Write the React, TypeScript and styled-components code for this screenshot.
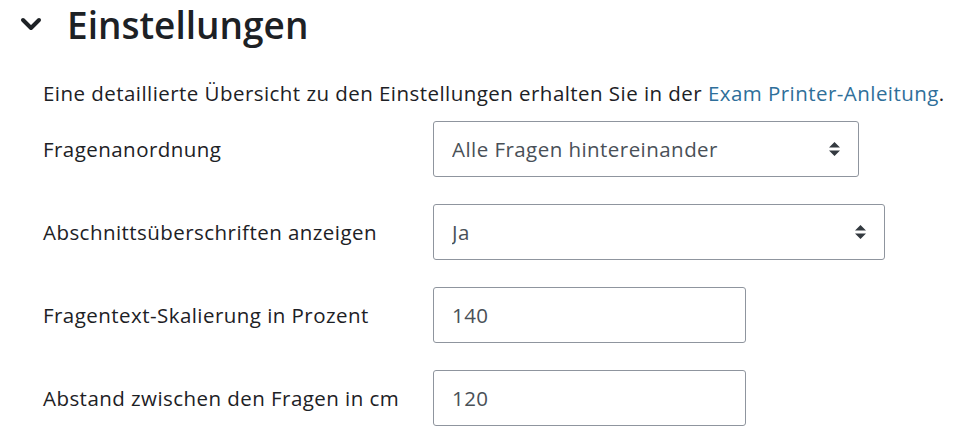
import React from 'react'
import styled, { createGlobalStyle } from 'styled-components'

const GlobalStyle = createGlobalStyle`
    body {
        margin: 0;
        background: #fff;
        font-family: "Open Sans", "Liberation Sans", sans-serif;
        color: #1d2125;
    }
`

const Page = styled.div`
    width: 961px;
    height: 430px;
    overflow: hidden;
    box-sizing: border-box;
    padding: 0 0 0 20px;
`

const Header = styled.div`
    display: flex;
    align-items: center;
    height: 48px;
    gap: 25px;

    svg {
        width: 22px;
        height: 14px;
        flex-shrink: 0;
    }
`

const Title = styled.h2`
    margin: 0;
    font-size: 37px;
    font-weight: 600;
    color: #1d2125;
`

const Body = styled.div`
    padding-left: 23px;
    font-size: 20.5px;
    letter-spacing: 0.45px;
`

const Intro = styled.p`
    margin: 30px 0 0;
    line-height: 30px;

    a {
        color: #2f6f9a;
        text-decoration: none;
    }
`

const Form = styled.div`
    margin-top: 13px;
    display: flex;
    flex-direction: column;
    gap: 27px;
`

const Row = styled.div`
    display: flex;
    align-items: center;
    height: 56px;
`

const Label = styled.label`
    width: 390px;
    flex-shrink: 0;
`

const SelectWrap = styled.div<{ $w: number }>`
    position: relative;
    width: ${p => p.$w}px;
    height: 56px;

    svg {
        position: absolute;
        right: 19px;
        top: 21px;
        width: 11px;
        height: 14px;
        pointer-events: none;
    }
`

const Select = styled.select`
    appearance: none;
    width: 100%;
    height: 100%;
    box-sizing: border-box;
    border: 1px solid #8f959e;
    border-radius: 3px;
    background: #fff;
    padding: 0 40px 0 18px;
    font: inherit;
    letter-spacing: inherit;
    color: #495057;
`

const Input = styled.input`
    width: 313px;
    height: 56px;
    box-sizing: border-box;
    border: 1px solid #8f959e;
    border-radius: 3px;
    padding: 0 18px;
    font: inherit;
    letter-spacing: inherit;
    color: #495057;
`

const Arrows = () => (
    <svg viewBox="0 0 11 14">
        <path d="M5.5 0 L11 5.5 H0 Z M0 8.5 H11 L5.5 14 Z" fill="#343a40" />
    </svg>
)

const selects = [
    { label: 'Fragenanordnung', value: 'Alle Fragen hintereinander', w: 426 },
    { label: 'Abschnittsüberschriften anzeigen', value: 'Ja', w: 452 },
]

const inputs = [
    { label: 'Fragentext-Skalierung in Prozent', value: '140' },
    { label: 'Abstand zwischen den Fragen in cm', value: '120' },
]

export default function App() {
    return (
        <Page>
            <GlobalStyle />
            <Header>
                <svg viewBox="0 0 22 14">
                    <path d="M3 3 L11 11 L19 3" fill="none" stroke="#1d2125" strokeWidth="4" strokeLinecap="round" strokeLinejoin="round" />
                </svg>
                <Title>Einstellungen</Title>
            </Header>
            <Body>
                <Intro>
                    Eine detaillierte Übersicht zu den Einstellungen erhalten Sie in der{' '}
                    <a href="#">Exam Printer-Anleitung</a>.
                </Intro>
                <Form>
                    {selects.map(s => (
                        <Row key={s.label}>
                            <Label>{s.label}</Label>
                            <SelectWrap $w={s.w}>
                                <Select defaultValue={s.value}>
                                    <option>{s.value}</option>
                                </Select>
                                <Arrows />
                            </SelectWrap>
                        </Row>
                    ))}
                    {inputs.map(i => (
                        <Row key={i.label}>
                            <Label>{i.label}</Label>
                            <Input defaultValue={i.value} />
                        </Row>
                    ))}
                </Form>
            </Body>
        </Page>
    )
}
